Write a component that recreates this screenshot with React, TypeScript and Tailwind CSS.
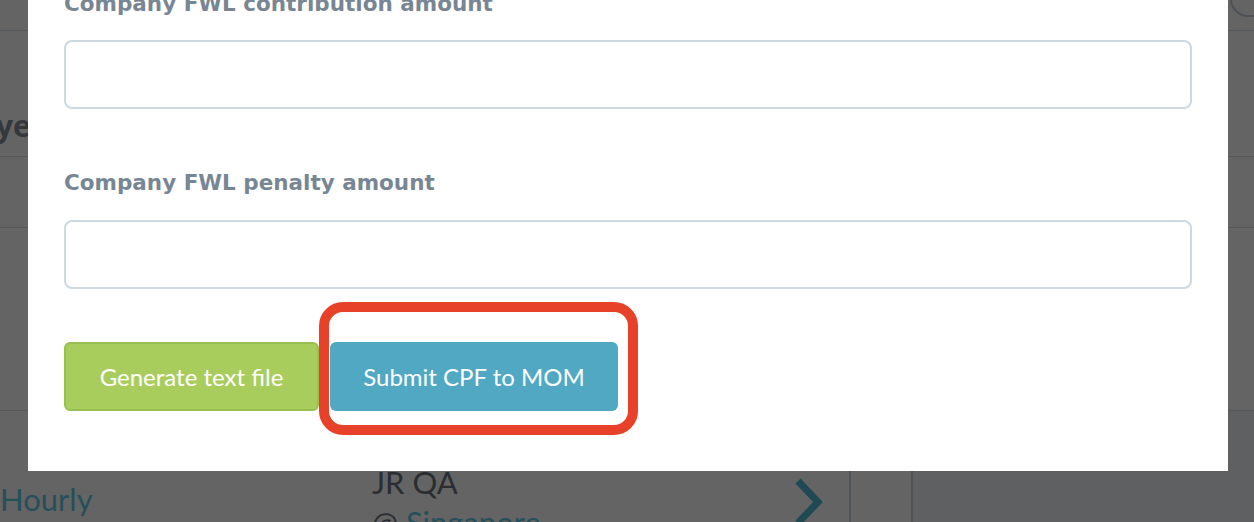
import React from 'react';

const labelCls = "block text-[21.5px] leading-[28px] font-bold text-[#788693]";
const inputCls = "block w-full h-[69px] rounded-lg border-2 border-[#cdd8e0] bg-white px-4 text-lg outline-none";

const App = () => {
  return (
    <div className="relative w-[1254px] h-[522px] overflow-hidden bg-[#646464]" style={{ fontFamily: "'Open Sans', sans-serif" }}>
      {/* page behind the dimmed overlay */}
      <div className="w-full">
        <div className="h-[31px] border-b border-[#53585c]" />
        <div className="h-[126px] border-b border-[#53585c] flex items-end pb-[8px]">
          <span className="-ml-[97px] text-[30px] font-bold text-[#34383c]">Employee</span>
        </div>
        <div className="h-[71px] border-b border-[#53585c]" />
        <div className="h-[183px] border-b border-[#53585c]" />
        <div className="flex h-[111px]" style={{ fontFamily: "Lato, sans-serif" }}>
          <div className="w-[372px] pt-[65px]">
            <span className="text-[31px] text-[#25505a]">Hourly</span>
          </div>
          <div className="w-[420px] pt-[51px] text-[31px] leading-[40px] text-[#2a2e32]">
            <div>JR QA</div>
            <div>@ <span className="text-[#25505a]">Singapore</span></div>
          </div>
          <div className="w-[59px] border-r-2 border-[#4e5357] pt-[66px]">
            <svg width="34" height="50" viewBox="0 0 34 50">
              <path d="M6 4 L26 25 L6 46" fill="none" stroke="#1f4a55" strokeWidth="7" />
            </svg>
          </div>
          <div className="w-[62px] border-r-2 border-[#4e5357]" />
          <div className="flex-1 bg-[#5f6061]" />
        </div>
      </div>

      {/* top right corner fragment */}
      <div className="absolute right-[-20px] top-[-30px] w-[44px] h-[47px] rounded-[18px] border-2 border-[#4e5256]" />

      {/* modal */}
      <div className="absolute left-[28px] top-[-10px] w-[1200px] bg-white px-9 pb-[60px]">
        <label className={labelCls} style={{ fontFamily: "'DejaVu Sans', sans-serif" }}>Company FWL contribution amount</label>
        <input className={`${inputCls} mt-[22px]`} />

        <label className={`${labelCls} mt-[60px]`} style={{ fontFamily: "'DejaVu Sans', sans-serif" }}>Company FWL penalty amount</label>
        <input className={`${inputCls} mt-[23px]`} />

        <div className="flex items-start mt-[53px]" style={{ fontFamily: "Lato, sans-serif" }}>
          <button className="w-[255px] h-[69px] rounded-md border-2 border-[#98c04e] bg-[#a8cd5d] text-[24px] text-white">
            Generate text file
          </button>
          <div className="relative ml-[11px]">
            <button className="w-[288px] h-[69px] rounded-md bg-[#50a8c3] text-[24px] text-white">
              Submit CPF to MOM
            </button>
            <div className="absolute left-[-11px] top-[-40px] w-[319px] h-[133px] rounded-[24px] border-[10px] border-[#e8412a]" />
          </div>
        </div>
      </div>
    </div>
  );
};

export default App;
